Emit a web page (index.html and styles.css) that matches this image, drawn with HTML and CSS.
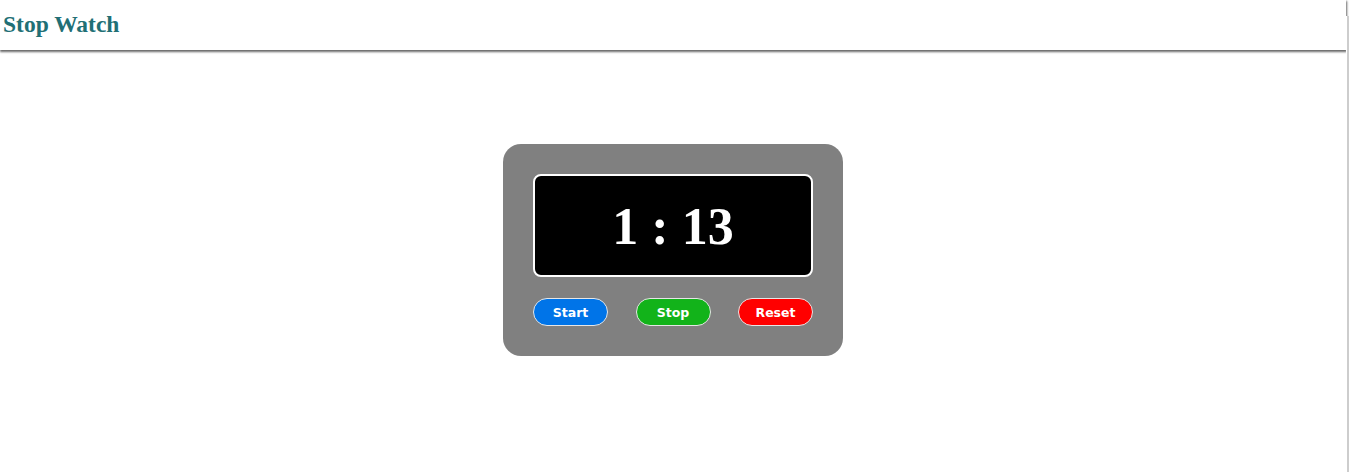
FILE: index.html
```html
<!DOCTYPE html>
<html lang="en">
<head>
<meta charset="utf-8">
<title>Stop Watch</title>
<link rel="stylesheet" href="styles.css">
</head>
<body>
<div class="page">
  <header class="topbar">
    <h1 class="title">Stop Watch</h1>
  </header>
  <main class="stage">
    <section class="watch">
      <div class="display">1 : 13</div>
      <div class="controls">
        <button class="btn btn-start">Start</button>
        <button class="btn btn-stop">Stop</button>
        <button class="btn btn-reset">Reset</button>
      </div>
    </section>
  </main>
</div>
<div class="edge"></div>
</body>
</html>
```

FILE: styles.css
```css
* { box-sizing: border-box; }
html, body {
  margin: 0;
  padding: 0;
  background: #fff;
  height: 100%;
  overflow: hidden;
}
.page {
  width: calc(100% - 3px);
  height: 100%;
}
.topbar {
  height: 50px;
  display: flex;
  align-items: center;
  padding-left: 3px;
  padding-bottom: 1px;
  box-shadow: 0 1px 2px 0.5px #6a6a6a;
  background: #fff;
}
.title {
  margin: 0;
  font-family: "Liberation Serif", "Times New Roman", serif;
  font-weight: bold;
  font-size: 23.5px;
  color: #216f75;
  line-height: 1;
}
.stage {
  display: flex;
  justify-content: center;
  padding-top: 94px;
}
.watch {
  width: 340px;
  background: #808080;
  border-radius: 18px;
  padding: 30px 30px 30px;
}
.display {
  height: 103px;
  background: #000;
  border: 2px solid #fff;
  border-radius: 8px;
  display: flex;
  align-items: center;
  justify-content: center;
  color: #fff;
  font-family: "Liberation Serif", "Times New Roman", serif;
  font-weight: bold;
  font-size: 52px;
  line-height: 1;
  padding-top: 2px;
}
.controls {
  margin-top: 21px;
  display: flex;
  justify-content: space-between;
}
.btn {
  width: 75px;
  height: 28px;
  border-radius: 14px;
  border: 1px solid #e6e6e6;
  color: #fff;
  font-family: "DejaVu Sans", Verdana, sans-serif;
  font-weight: bold;
  font-size: 12.5px;
  padding: 0;
  display: flex;
  align-items: center;
  justify-content: center;
}
.btn-start { background: #0074e8; }
.btn-stop { background: #12b31a; }
.btn-reset { background: #ff0000; }
.edge {
  position: fixed;
  top: 16px;
  right: 0;
  bottom: 0;
  width: 3px;
  border-left: 1px solid #fff;
  background: #cdcdcd;
}
```
